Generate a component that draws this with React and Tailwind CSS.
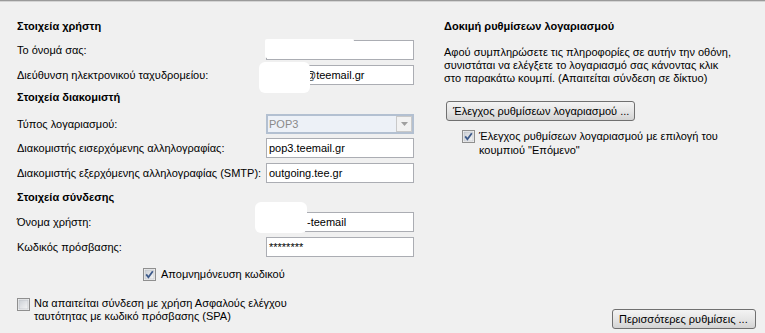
const font = { fontFamily: '"Liberation Sans", Arial, sans-serif' };

const CheckBox = ({ checked }) => (
    <svg width="13" height="13" viewBox="0 0 13 13" className="shrink-0">
        <defs>
            <linearGradient id="cbg" x1="0" y1="0" x2="1" y2="1">
                <stop offset="0" stopColor="#cbcfd5" />
                <stop offset="1" stopColor="#f6f6f6" />
            </linearGradient>
        </defs>
        <rect x="0.5" y="0.5" width="12" height="12" fill="#f4f4f4" stroke="#8f8f8f" />
        <rect x="2" y="2" width="9" height="9" fill="url(#cbg)" stroke="#b7bcc3" strokeWidth="0.6" />
        {checked && <path d="M3.2 6.4 L5.4 9.2 L9.8 3.2" fill="none" stroke="#3d5a8a" strokeWidth="1.8" />}
    </svg>
);

const Input = ({ value, children }) => (
    <div className="relative w-[148px] h-[20px] bg-white border border-[#abadb3] px-[2px] flex items-center text-black">
        {value}
        {children}
    </div>
);

const Blob = ({ className }) => <div className={`absolute bg-white ${className}`}></div>;

const Row = ({ label, top, children }) => (
    <div className="flex items-center" style={{ marginTop: top }}>
        <div className="w-[249px]">{label}</div>
        {children}
    </div>
);

const WinButton = ({ children, className }) => (
    <div className={`h-[20px] rounded-[3px] border border-[#707070] bg-gradient-to-b from-[#f3f3f3] via-[#e6e6e6] to-[#d3d3d3] flex items-center px-[6px] whitespace-nowrap text-black ${className}`}>
        {children}
    </div>
);

export default function App() {
    return (
        <div className="w-[765px] h-[333px] bg-[#f0f0f0] text-[11px] text-black overflow-hidden" style={font}>
            <div className="h-[1px] bg-[#9a9a9a]"></div>
            <div className="h-[1px] bg-[#d4d4d4]"></div>
            <div className="flex h-[331px]">
                <div className="w-[444px] pl-[17px]">
                    <div className="mt-[16px] h-[16px] leading-[16px] font-bold">Στοιχεία χρήστη</div>
                    <Row label="Το όνομά σας:" top={6}>
                        <Input>
                            <Blob className="left-[-2px] top-[-2px] w-[89px] h-[19px] rounded-[2px]" />
                        </Input>
                    </Row>
                    <Row label="Διεύθυνση ηλεκτρονικού ταχυδρομείου:" top={5}>
                        <Input>
                            <span className="pl-[36px]">@teemail.gr</span>
                            <Blob className="left-[-8px] top-[-4px] w-[51px] h-[31px] rounded-[6px]" />
                        </Input>
                    </Row>
                    <div className="mt-[4px] h-[16px] leading-[16px] font-bold">Στοιχεία διακομιστή</div>
                    <Row label="Τύπος λογαριασμού:" top={9}>
                        <div className="w-[148px] h-[20px] border-2 border-[#b3c0d1] bg-[#edf1f7] flex items-center justify-between text-[#8a8a8a]">
                            <span className="pl-[1px]">POP3</span>
                            <div className="w-[16px] h-[16px] bg-[#f2f2f2] border border-[#c9c9c9] flex items-center justify-center">
                                <svg width="7" height="4" viewBox="0 0 7 4"><path d="M0 0 H7 L3.5 4 Z" fill="#a0a0a0" /></svg>
                            </div>
                        </div>
                    </Row>
                    <Row label="Διακομιστής εισερχόμενης αλληλογραφίας:" top={4}>
                        <Input value="pop3.teemail.gr" />
                    </Row>
                    <Row label="Διακομιστής εξερχόμενης αλληλογραφίας (SMTP):" top={5}>
                        <Input value="outgoing.tee.gr" />
                    </Row>
                    <div className="mt-[6px] h-[16px] leading-[16px] font-bold">Στοιχεία σύνδεσης</div>
                    <Row label="Όνομα χρήστη:" top={7}>
                        <Input>
                            <span className="pl-[38px]">-teemail</span>
                            <Blob className="left-[-12px] top-[-11px] w-[52px] h-[31px] rounded-[6px]" />
                        </Input>
                    </Row>
                    <Row label="Κωδικός πρόσβασης:" top={5}>
                        <Input value="********" />
                    </Row>
                    <div className="mt-[9px] pl-[126px] flex items-center gap-[5px]">
                        <CheckBox checked />
                        <span>Απομνημόνευση κωδικού</span>
                    </div>
                    <div className="mt-[15px] flex items-start gap-[4px]">
                        <CheckBox />
                        <span className="leading-[13px] w-[300px] -mt-[1px]">Να απαιτείται σύνδεση με χρήση Ασφαλούς ελέγχου ταυτότητας με κωδικό πρόσβασης (SPA)</span>
                    </div>
                </div>
                <div className="flex-1 flex flex-col pr-[9px]">
                    <div className="mt-[16px] h-[16px] leading-[16px] font-bold">Δοκιμή ρυθμίσεων λογαριασμού</div>
                    <div className="mt-[12px] leading-[13px] w-[290px]">
                        Αφού συμπληρώσετε τις πληροφορίες σε αυτήν την οθόνη, συνιστάται να ελέγξετε το λογαριασμό σας κάνοντας κλικ στο παρακάτω κουμπί. (Απαιτείται σύνδεση σε δίκτυο)
                    </div>
                    <WinButton className="mt-[16px] ml-[2px] w-[189px]">Έλεγχος ρυθμίσεων λογαριασμού ...</WinButton>
                    <div className="mt-[9px] ml-[18px] flex items-start gap-[4px]">
                        <CheckBox checked />
                        <span className="leading-[14px] w-[260px] -mt-[1px]">Έλεγχος ρυθμίσεων λογαριασμού με επιλογή του κουμπιού "Επόμενο"</span>
                    </div>
                    <WinButton className="mt-auto mb-[4px] self-end w-[144px]">Περισσότερες ρυθμίσεις ...</WinButton>
                </div>
            </div>
        </div>
    );
}
